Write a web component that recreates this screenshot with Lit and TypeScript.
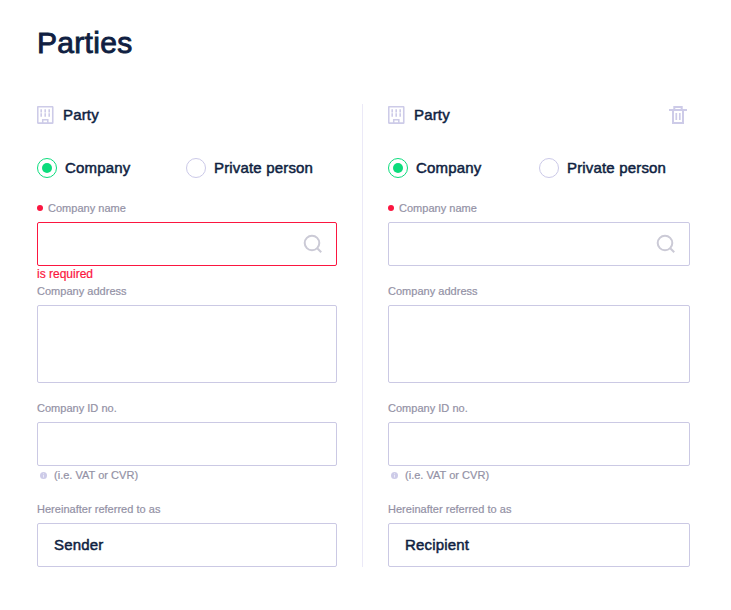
import { LitElement, html, css, svg, nothing } from "lit";
import { customElement, property } from "lit/decorators.js";
import { classMap } from "lit/directives/class-map.js";

const building = html`<svg class="building" width="17" height="18" viewBox="0 0 17 18" fill="none" stroke="#cdcbe8">
  <rect x="0.75" y="0.75" width="15" height="16.4" rx="0.4" stroke-width="1.6"></rect>
  ${[4.2, 8.2, 12.2].map((x) => svg`<path d="M${x} 3.3V6.5M${x} 7.3V10.8" stroke-width="1.6"></path>`)}
  <path d="M5.7 17V13.7H10.8V17" stroke-width="1.5"></path>
</svg>`;

const trash = html`<svg width="18" height="18" viewBox="0 0 18 18" fill="none" stroke="#cdcbe8">
  <path d="M0 4H18" stroke-width="2"></path>
  <path d="M5.3 4V1H12.7V4" stroke-width="2"></path>
  <path d="M4 4V17H14V4" stroke-width="2"></path>
  <path d="M7.3 7V14M10.8 7V14" stroke-width="1.7"></path>
</svg>`;

const magnifier = html`<svg width="20" height="20" viewBox="0 0 20 20" fill="none" stroke="#cbcad6" stroke-width="2">
  <circle cx="9" cy="9" r="7.3"></circle>
  <path d="M14.2 14.2L18.2 18.2"></path>
</svg>`;

const info = html`<svg width="7" height="7" viewBox="0 0 7 7">
  <circle cx="3.5" cy="3.5" r="3.5" fill="#cdcbe8"></circle>
  <path d="M3.5 1.4V2.2M3.5 2.9V5.5" stroke="#f4f3fb" stroke-width="0.8"></path>
</svg>`;

@customElement("party-form")
export class PartyForm extends LitElement {
  @property() alias = "";
  @property({ type: Boolean }) invalid = false;
  @property({ type: Boolean }) removable = false;

  static styles = css`
    :host { display: block; }
    .head { display: flex; align-items: center; height: 20px; }
    svg { display: block; flex: none; }
    .strong {
      font-size: 15px; line-height: 20px; color: #101f42;
      letter-spacing: 0.17px; -webkit-text-stroke: 0.5px #101f42;
    }
    .head .strong { margin-left: 9px; flex: 1; }
    .trash { margin-right: 3px; }
    .radios { display: grid; grid-template-columns: var(--first-option, 151px) 1fr; margin-top: 33px; }
    .radio { display: flex; align-items: center; gap: 8px; white-space: nowrap; }
    .dot {
      box-sizing: border-box; width: 20px; height: 20px; flex: none;
      border: 1px solid #cbc9e8; border-radius: 50%;
      display: flex; align-items: center; justify-content: center;
    }
    .dot.on { border-color: #0bdc7c; }
    .dot.on::after { content: ""; width: 10px; height: 10px; border-radius: 50%; background: #0bdc7c; }
    .label {
      display: flex; align-items: center; height: 14px; font-size: 11px; line-height: 14px;
      color: #9391a5; white-space: nowrap; letter-spacing: 0.02px; -webkit-text-stroke: 0.2px #9391a5;
    }
    .label.name { margin-top: 23px; }
    .label.name::before {
      content: ""; width: 6px; height: 6px; border-radius: 50%; background: #fb1640; margin-right: 5px;
    }
    .box {
      box-sizing: border-box; height: 44px; margin-top: 7px; border: 1px solid #cbc9e4;
      border-radius: 2px; display: flex; align-items: center; padding: 0 13px 0 16px;
    }
    .box.bad { border-color: #fb1640; }
    .box.search { justify-content: flex-end; }
    .box.tall { height: 78px; }
    .error {
      height: 18px; font-size: 12px; line-height: 16px; color: #fb1640; -webkit-text-stroke: 0.2px #fb1640;
    }
    .id { margin-top: 18px; }
    .hint { margin-top: 2px; padding-left: 3px; gap: 7px; }
    .ref { margin-top: 20px; }
  `;

  render() {
    return html`
      <div class="head">
        ${building}<span class="strong">Party</span>
        ${this.removable ? html`<span class="trash">${trash}</span>` : nothing}
      </div>
      <div class="radios">
        <div class="radio"><span class="dot on"></span><span class="strong">Company</span></div>
        <div class="radio"><span class="dot"></span><span class="strong">Private person</span></div>
      </div>
      <div class="label name">Company name</div>
      <div class=${classMap({ box: true, search: true, bad: this.invalid })}>${magnifier}</div>
      <div class="error">${this.invalid ? "is required" : nothing}</div>
      <div class="label">Company address</div>
      <div class="box tall"></div>
      <div class="label id">Company ID no.</div>
      <div class="box"></div>
      <div class="label hint">${info}<span>(i.e. VAT or CVR)</span></div>
      <div class="label ref">Hereinafter referred to as</div>
      <div class="box"><span class="strong">${this.alias}</span></div>
    `;
  }
}

@customElement("app-root")
export class AppRoot extends LitElement {
  static styles = css`
    :host {
      display: block; box-sizing: border-box; height: 610px; padding: 24px 41px 0 37px;
      background: #fff; font-family: "Liberation Sans", Arial, sans-serif;
    }
    h1 {
      margin: 0; font-size: 30px; line-height: 38px; font-weight: 400; color: #101f42;
      letter-spacing: 0.3px; -webkit-text-stroke: 0.9px #101f42;
    }
    .parties { display: grid; grid-template-columns: 300px 1px 302px; column-gap: 25px; margin-top: 42px; }
    .divider { background: #ebe9f7; }
    party-form { padding-top: 1px; }
    .first { --first-option: 149px; }
  `;

  render() {
    return html`
      <h1>Parties</h1>
      <div class="parties">
        <party-form class="first" alias="Sender" invalid></party-form>
        <div class="divider"></div>
        <party-form alias="Recipient" removable></party-form>
      </div>
    `;
  }
}
